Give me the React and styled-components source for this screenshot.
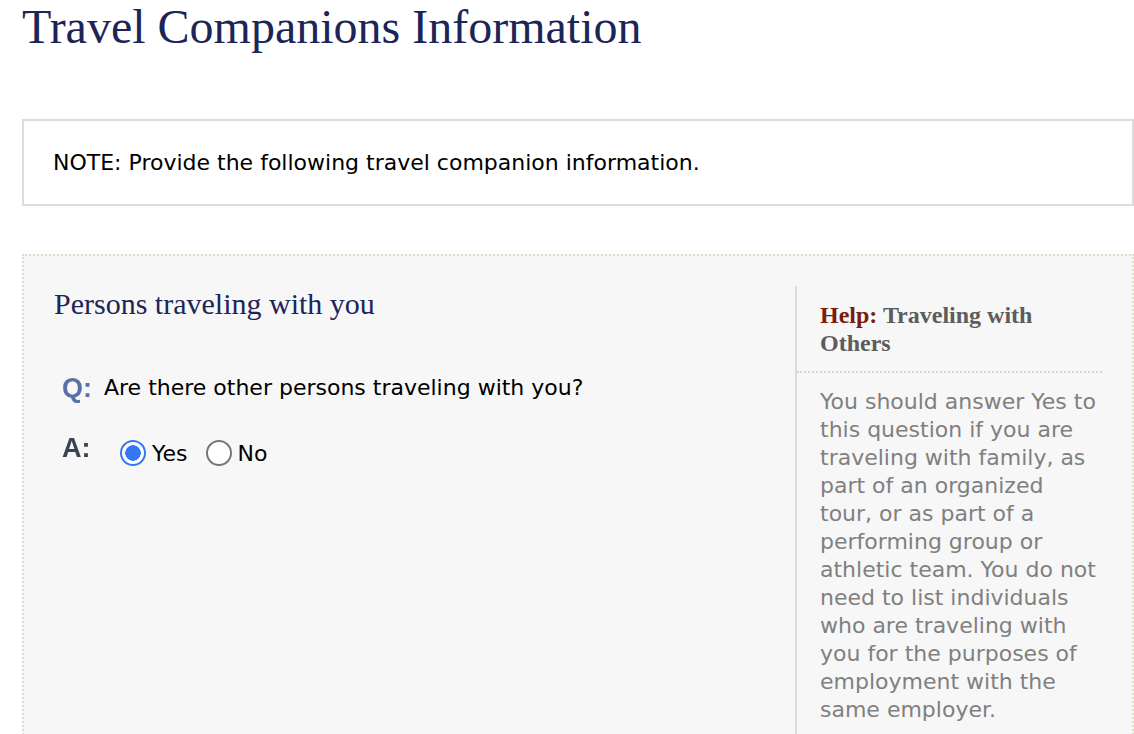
import React, { useState } from "react";
import styled, { createGlobalStyle } from "styled-components";

const GlobalStyle = createGlobalStyle`
  html, body {
    margin: 0;
    padding: 0;
    background: #fff;
  }
  body {
    font-family: "DejaVu Sans", Verdana, sans-serif;
  }
`;

const Page = styled.div`
  padding: 0 0 0 22px;
  width: 1112px;
`;

const Title = styled.h1`
  margin: 0;
  padding-top: 2px;
  font-family: "Liberation Serif", "Times New Roman", serif;
  font-weight: normal;
  font-size: 48px;
  line-height: 50px;
  color: #1c2558;
`;

const Note = styled.div`
  margin-top: 67px;
  border: 2px solid #dcdcdc;
  height: 83px;
  display: flex;
  align-items: center;
  padding-left: 29px;
  font-size: 22px;
  color: #000;
`;

const Section = styled.div`
  margin-top: 48px;
  border: 2px dotted #e3dcc8;
  border-bottom: none;
  background: #f7f7f7;
  display: flex;
  align-items: flex-start;
  padding: 30px 0 0 30px;
  min-height: 480px;
`;

const Main = styled.div`
  flex: 1;
`;

const Heading = styled.h2`
  margin: 0;
  font-family: "Liberation Serif", "Times New Roman", serif;
  font-weight: normal;
  font-size: 30px;
  line-height: 36px;
  color: #1c2558;
`;

const Row = styled.div`
  display: flex;
  align-items: flex-start;
  margin-top: ${(p) => p.$gap}px;
  padding-left: 8px;
`;

const Mark = styled.span`
  font-family: "Liberation Sans", Arial, sans-serif;
  font-weight: bold;
  font-size: 27px;
  line-height: 26px;
  color: ${(p) => p.$color};
  width: 42px;
  flex: none;
  filter: blur(0.5px);
`;

const Question = styled.span`
  font-size: 22px;
  line-height: 26px;
  color: #000;
`;

const Options = styled.div`
  display: flex;
  align-items: center;
  margin-left: 16px;
  margin-top: 5px;
  font-size: 22px;
  color: #000;
`;

const Option = styled.label`
  display: flex;
  align-items: center;
  margin-right: 18px;
  cursor: pointer;
`;

const Radio = styled.input.attrs({ type: "radio" })`
  appearance: none;
  margin: 0 6px 0 0;
  width: 26px;
  height: 26px;
  border-radius: 50%;
  border: 2px solid #777;
  background: #fff;
  box-sizing: border-box;
  &:checked {
    border-color: #3478f6;
    background: radial-gradient(circle, #3478f6 0 7.5px, #fff 8px);
  }
`;

const Help = styled.aside`
  width: 305px;
  margin-right: 30px;
  border-left: 2px solid #dadada;
  min-height: 470px;
`;

const HelpTitle = styled.div`
  padding: 15px 0 14px 23px;
  font-family: "Liberation Serif", "Times New Roman", serif;
  font-weight: bold;
  font-size: 24px;
  line-height: 28px;
  color: #5c5c5c;
  border-bottom: 2px dotted #d6d6d6;
`;

const HelpLabel = styled.span`
  color: #7a1c0e;
`;

const HelpText = styled.p`
  margin: 15px 0 0;
  padding-left: 23px;
  font-size: 22px;
  line-height: 28px;
  color: #808080;
`;

export default function App() {
  const [answer, setAnswer] = useState("Y");
  return (
    <>
      <GlobalStyle />
      <Page>
        <Title>Travel Companions Information</Title>
        <Note>NOTE: Provide the following travel companion information.</Note>
        <Section>
          <Main>
            <Heading>Persons traveling with you</Heading>
            <Row $gap={53}>
              <Mark $color="#5872a9">Q:</Mark>
              <Question>Are there other persons traveling with you?</Question>
            </Row>
            <Row $gap={34}>
              <Mark $color="#3b4352">A:</Mark>
              <Options>
                <Option>
                  <Radio
                    name="other"
                    checked={answer === "Y"}
                    onChange={() => setAnswer("Y")}
                  />
                  Yes
                </Option>
                <Option>
                  <Radio
                    name="other"
                    checked={answer === "N"}
                    onChange={() => setAnswer("N")}
                  />
                  No
                </Option>
              </Options>
            </Row>
          </Main>
          <Help>
            <HelpTitle>
              <HelpLabel>Help:</HelpLabel> Traveling with Others
            </HelpTitle>
            <HelpText>
              You should answer Yes to this question if you are traveling with
              family, as part of an organized tour, or as part of a performing
              group or athletic team. You do not need to list individuals who
              are traveling with you for the purposes of employment with the
              same employer.
            </HelpText>
          </Help>
        </Section>
      </Page>
    </>
  );
}
